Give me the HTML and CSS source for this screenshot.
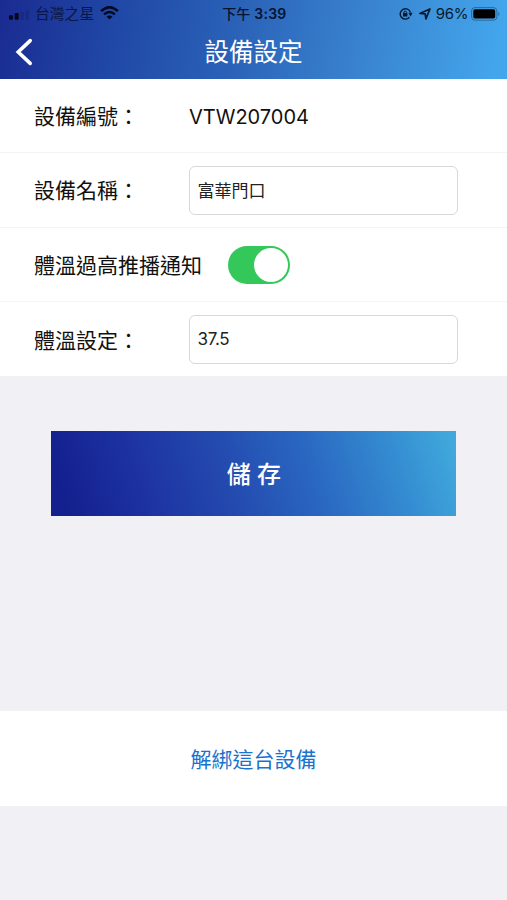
FILE: index.html
```html
<!DOCTYPE html>
<html lang="zh-Hant">
<head>
<meta charset="utf-8">
<title>設備設定</title>
<link rel="stylesheet" href="styles.css">
</head>
<body>
<header class="header">
  <div class="status">
    <div class="status-left">
      <svg class="signal" width="20" height="10" viewBox="0 0 20 10"><rect x="0" y="5.3" width="4" height="4.5" rx="1"/><rect x="5.7" y="3" width="4" height="6.8" rx="1"/><rect x="11.4" y="1.5" width="3.6" height="8.3" rx="1" opacity=".15"/><rect x="16.5" y="0" width="3.5" height="9.8" rx="1" opacity=".15"/></svg>
      <span class="carrier">台灣之星</span>
      <svg class="wifi" width="19" height="14" viewBox="0 0 19 14"><g fill="none" stroke="#05091f" stroke-width="2.5"><path d="M1.1 5.2Q9.5-2.6 17.9 5.2"/><path d="M4.1 8.4Q9.5 3.5 14.9 8.4"/></g><path d="M6.5 10.6Q9.5 8.2 12.5 10.6L9.5 13.6Z"/></svg>
    </div>
    <div class="time"><span>下午</span> 3:39</div>
    <div class="status-right">
      <svg class="lock" width="14" height="12" viewBox="0 0 14 12"><g fill="none" stroke="#071a30" stroke-width="1.4"><path d="M10.4 9.3A5.2 5.2 0 1 1 11.4 4.4"/><path d="M4.8 5.5V4.6a1.4 1.4 0 0 1 2.8 0v.9" stroke-width="1"/></g><rect x="4" y="5" width="4.4" height="3.6" rx=".5"/><path d="M9.4 4.8h4.2l-2 3.6Z"/></svg>
      <svg class="arrow" width="12" height="12" viewBox="0 0 12 12"><path d="M.9 5.5 10.9 1 6.9 10.9 6.2 5.9Z" fill="none" stroke="#071a30" stroke-width="1.7" stroke-linejoin="round"/></svg>
      <span class="percent">96%</span>
      <svg class="battery" width="30" height="14" viewBox="0 0 30 14"><rect x=".6" y=".6" width="25.3" height="12.6" rx="3.4" fill="none" stroke="#071a30" stroke-opacity=".4"/><rect x="2.3" y="2.3" width="21.9" height="9.2" rx="1.8" fill="#000"/><path d="M27.3 4.8q2.3 2.2 0 4.4Z" opacity=".4"/></svg>
    </div>
  </div>
  <div class="nav">
    <svg class="back" width="18" height="28" viewBox="0 0 18 28"><path d="M15.2 2.6 3.2 14 15.2 25.4" fill="none" stroke="#fff" stroke-width="3.6" stroke-linecap="round"/></svg>
    <h1 class="title">設備設定</h1>
  </div>
</header>
<main>
  <section class="form">
    <div class="row"><span class="label">設備編號：</span><span class="value">VTW207004</span></div>
    <div class="row"><label class="label" for="name">設備名稱：</label><input class="field" id="name" type="text" value="富華門口"></div>
    <div class="row"><span class="label label-wide">體溫過高推播通知</span><span class="toggle"></span></div>
    <div class="row"><label class="label" for="temp">體溫設定：</label><input class="field field-number" id="temp" type="text" value="37.5"></div>
  </section>
  <button class="save" type="button">儲 存</button>
  <button class="unbind" type="button">解綁這台設備</button>
</main>
</body>
</html>
```
FILE: styles.css
```css
* { box-sizing: border-box; }
body {
  margin: 0;
  height: 900px;
  overflow: hidden;
  background: #f0f0f5;
  color: #111;
  font-family: Inter, "Noto Sans CJK TC", sans-serif;
}
svg { display: block; flex: none; }
.header {
  height: 79px;
  background: linear-gradient(100deg, #1a2b91 0%, #2048a6 23%, #2b64b9 48%, #3983d0 71%, #43a5eb 97%);
}
.status {
  display: grid;
  grid-template-columns: 1fr auto 1fr;
  align-items: center;
  height: 27px;
  padding: 0 7px 0 9px;
  color: #071a30;
  white-space: nowrap;
}
.status-left, .status-right { display: flex; align-items: center; height: 27px; }
.status-right { justify-content: flex-end; }
.signal { margin-top: 3px; fill: #05091f; }
.carrier { margin-left: 6px; font-size: 14.8px; line-height: 28px; color: #0a1746; }
.wifi { margin-left: 6px; margin-top: -1px; fill: #05091f; }
.time { font-size: 14px; font-weight: 600; line-height: 27px; letter-spacing: .3px; color: #071331; }
.time span { font-weight: 500; letter-spacing: 0; }
.lock { margin-right: 6px; fill: #071a30; }
.arrow { margin-right: 5px; }
.percent { font-size: 15px; line-height: 27px; margin-right: 3px; letter-spacing: -.4px; }
.battery { margin-right: -1px; fill: #071a30; }
.nav {
  display: grid;
  grid-template-columns: 50px 1fr 50px;
  align-items: center;
  height: 50px;
}
.back { margin-left: 15px; }
.title {
  margin: 0;
  font-size: 24.5px;
  font-weight: 400;
  line-height: 50px;
  text-align: center;
  color: #fff;
}
.form { background: #fff; }
.row {
  display: flex;
  align-items: center;
  height: 74.5px;
  padding: 1px 0 0 34px;
  border-bottom: 1.5px solid #f4f4f6;
}
.row:first-child { height: 74px; }
.row:last-child { height: 74px; padding-top: 0; border-bottom: 0; }
.label { width: 155px; padding-top: 2px; font-size: 21px; line-height: 30px; white-space: nowrap; }
.row:last-child .label { padding-top: 3px; }
.label-wide { width: 194px; }
.value { padding-top: 1px; font-size: 20px; line-height: 30px; }
.field {
  width: 269.4px;
  height: 49px;
  margin-left: -.5px;
  padding: 0 8px 2px;
  border: 1.5px solid #d8d8da;
  border-radius: 6px;
  background: #fff;
  color: #222;
  font: 17px Inter, "Noto Sans CJK TC", sans-serif;
}
.field-number { padding-bottom: 1px; letter-spacing: -.3px; }
.toggle {
  display: flex;
  justify-content: flex-end;
  width: 62px;
  height: 38px;
  padding: 2px;
  border-radius: 19px;
  background: #34c759;
}
.toggle::after {
  content: "";
  width: 34px;
  height: 34px;
  border-radius: 50%;
  background: #fff;
}
.save {
  display: block;
  width: 405px;
  height: 85px;
  margin: 55px 0 0 51.4px;
  padding: 0 0 2px;
  border: 0;
  background: linear-gradient(72deg, #13208e 4%, #1c309f 21%, #2348ae 42%, #2a68c2 64%, #348bd0 83%, #40a8dc 98%);
  color: #fff;
  font: 500 24px Inter, "Noto Sans CJK TC", sans-serif;
}
.unbind {
  display: block;
  width: 100%;
  height: 95px;
  margin-top: 195px;
  padding: 0 0 2px;
  border: 0;
  background: #fff;
  color: #1972ce;
  font: 21px Inter, "Noto Sans CJK TC", sans-serif;
}
```
